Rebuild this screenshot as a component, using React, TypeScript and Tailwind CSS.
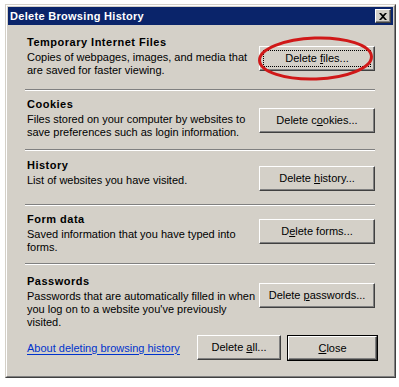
import React from 'react';

type Section = {
  title: string;
  lines: string[];
  pre: string;
  key: string;
  post: string;
  box: string;
  textPad: string;
  btnPad: string;
  focused?: boolean;
};

const SECTIONS: Section[] = [
  {
    title: 'Temporary Internet Files',
    lines: ['Copies of webpages, images, and media that', 'are saved for faster viewing.'],
    pre: 'Delete ', key: 'f', post: 'iles...',
    box: 'h-[64px]', textPad: 'pt-[11px]', btnPad: 'pt-[21px]', focused: true,
  },
  {
    title: 'Cookies',
    lines: ['Files stored on your computer by websites to', 'save preferences such as login information.'],
    pre: 'Delete c', key: 'o', post: 'okies...',
    box: 'h-[58px]', textPad: 'pt-[7px]', btnPad: 'pt-[17px]',
  },
  {
    title: 'History',
    lines: ['List of websites you have visited.'],
    pre: 'Delete ', key: 'h', post: 'istory...',
    box: 'h-[53px]', textPad: 'pt-[8px]', btnPad: 'pt-[15px]',
  },
  {
    title: 'Form data',
    lines: ['Saved information that you have typed into', 'forms.'],
    pre: 'D', key: 'e', post: 'lete forms...',
    box: 'h-[57px]', textPad: 'pt-[7px]', btnPad: 'pt-[13px]',
  },
  {
    title: 'Passwords',
    lines: ['Passwords that are automatically filled in when', "you log on to a website you've previously", 'visited.'],
    pre: 'Delete ', key: 'p', post: 'asswords...',
    box: 'h-[69px]', textPad: 'pt-[10px]', btnPad: 'pt-[18px]',
  },
];

const font = "font-['Liberation_Sans',Arial,sans-serif]";

function Separator() {
  return <div className="border-t border-b border-t-[#808080] border-b-white" />;
}

function Button({ children, w, focused, isDefault }: { children: React.ReactNode; w: string; focused?: boolean; isDefault?: boolean }) {
  const raised = (
    <div className="relative flex h-full items-center justify-center border border-t-white border-l-white border-r-[#404040] border-b-[#404040] shadow-[inset_-1px_-1px_0_#808080] bg-[#d4d0c8]">
      {focused && <div className="absolute inset-[3px] border border-dotted border-black" />}
      <span className="relative">{children}</span>
    </div>
  );
  if (isDefault) {
    return <div className={`${w} h-[26px] border border-black`}>{raised}</div>;
  }
  return <div className={`${w} h-[25px]`}>{raised}</div>;
}

function Label({ pre, k, post }: { pre: string; k: string; post: string }) {
  return (
    <>
      {pre}
      <span className="underline underline-offset-[1px]">{k}</span>
      {post}
    </>
  );
}

export default function App() {
  return (
    <div className={`min-h-[387px] w-[399px] bg-white pl-[5px] pt-[4px] ${font} text-[11px] leading-[13px] text-black`}>
      {/* window frame */}
      <div className="w-[391px] h-[374px] border border-t-[#d4d0c8] border-l-[#d4d0c8] border-r-[#404040] border-b-[#404040]">
        <div className="h-full border border-t-white border-l-white border-r-[#808080] border-b-[#808080] bg-[#d4d0c8] p-px flex flex-col">
          {/* title bar */}
          <div className="h-[18px] bg-[#0a246a] flex items-center justify-between pl-[2px] pr-[2px]">
            <span className="text-white font-bold text-[11px] tracking-[0.3px]">Delete Browsing History</span>
            <div className="w-[16px] h-[14px] flex items-center justify-center border border-t-white border-l-white border-r-[#404040] border-b-[#404040] shadow-[inset_-1px_-1px_0_#808080] bg-[#d4d0c8]">
              <svg width="8" height="7" viewBox="0 0 8 7">
                <path d="M0 0h2l2 2 2-2h2L5 3.5 8 7H6L4 5 2 7H0l3-3.5z" fill="#000" />
              </svg>
            </div>
          </div>

          {/* sections */}
          <div className="pl-[17px] pr-[18px]">
            {SECTIONS.map((s, i) => (
              <div key={s.title}>
                {i > 0 && <Separator />}
                <div className={`flex justify-between ${s.box}`}>
                  <div className={`pl-[2px] ${s.textPad}`}>
                    <div className="font-bold tracking-[0.5px]">{s.title}</div>
                    <div className="mt-[2px] whitespace-nowrap">
                      {s.lines.map((l) => (
                        <div key={l}>{l}</div>
                      ))}
                    </div>
                  </div>
                  <div className={s.btnPad}>
                    <div className="relative">
                      <Button w="w-[116px]" focused={s.focused}>
                        <Label pre={s.pre} k={s.key} post={s.post} />
                      </Button>
                      {s.focused && (
                        <svg className="absolute left-[-3px] top-[-11px] pointer-events-none" width="120" height="47" viewBox="0 0 120 47">
                          <ellipse cx="59.5" cy="23.5" rx="56" ry="20.5" fill="none" stroke="#d01818" strokeWidth="3" transform="rotate(-2 59.5 23.5)" />
                        </svg>
                      )}
                    </div>
                  </div>
                </div>
              </div>
            ))}

            {/* bottom row */}
            <div className="flex items-center pt-[1px]">
              <span className="pl-[2px] text-[#0033cc] underline underline-offset-2">About deleting browsing history</span>
              <div className="ml-auto flex gap-[6px] -mr-[3px]">
                <Button w="w-[84px]">
                  <Label pre="Delete " k="a" post="ll..." />
                </Button>
                <Button w="w-[91px]" isDefault>
                  <Label pre="" k="C" post="lose" />
                </Button>
              </div>
            </div>
          </div>
        </div>
      </div>
    </div>
  );
}
